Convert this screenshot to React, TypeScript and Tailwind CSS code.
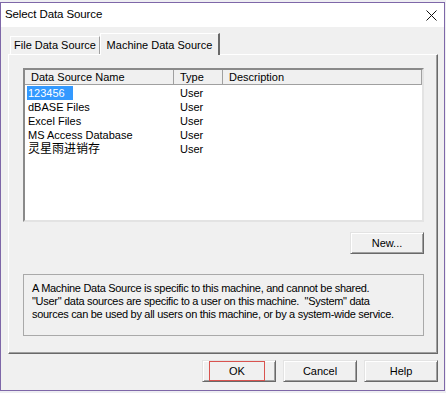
import React from 'react';

const rows = [
  { name: '123456', type: 'User', selected: true },
  { name: 'dBASE Files', type: 'User' },
  { name: 'Excel Files', type: 'User' },
  { name: 'MS Access Database', type: 'User' },
  { name: '灵星雨进销存', type: 'User' },
];

function WinButton({ label, focus = false }: { label: string; focus?: boolean }) {
  return (
    <button className="w-[74px] h-[22px] flex items-center justify-center bg-[#f0f0f0] border border-t-[#e3e3e3] border-l-[#e3e3e3] border-r-[#696969] border-b-[#696969] shadow-[inset_1px_1px_0_#ffffff,inset_-1px_-1px_0_#a0a0a0] text-[11px] text-black">
      {focus ? (
        <span className="w-[56px] h-[20px] -ml-[4px] flex items-center justify-center border border-[#d9534f]">{label}</span>
      ) : (
        label
      )}
    </button>
  );
}

export default function App() {
  return (
    <div
      className="w-[446px] h-[393px] bg-[#eeeef2] overflow-hidden"
      style={{ fontFamily: '"Liberation Sans", "Noto Sans CJK SC", sans-serif' }}
    >
      <div className="mt-[2px] w-[445px] h-[389px] border border-[#7e67a8] flex flex-col bg-[#f0f0f0]">
        {/* Title bar */}
        <div className="h-[24px] bg-white flex items-center justify-between pl-[4px] pr-[7px]">
          <span className="text-[11.5px] text-black tracking-[-0.1px]">Select Data Source</span>
          <svg width="11" height="11" viewBox="0 0 11 11">
            <path d="M0.5 0.5 L10.5 10.5 M10.5 0.5 L0.5 10.5" stroke="#111" strokeWidth="1" />
          </svg>
        </div>

        {/* Body */}
        <div className="flex-1 pl-[7px] pt-[6px]">
          {/* Tabs */}
          <div className="flex items-end h-[21px] pl-[2px]">
            <div className="h-[18px] w-[90px] flex items-center justify-center border-t border-l border-white border-r border-r-[#a0a0a0] text-[11px] text-black">
              File Data Source
            </div>
            <div className="relative z-10 -mb-px h-[22px] w-[120px] flex items-start pt-[3px] justify-center bg-[#f0f0f0] border-t border-l border-white border-r-2 border-r-[#696969] text-[11px] text-black">
              Machine Data Source
            </div>
          </div>

          {/* Panel */}
          <div className="w-[430px] h-[300px] border border-t-white border-l-white border-r-[#696969] border-b-[#696969] shadow-[inset_-1px_-1px_0_#a0a0a0] pl-[14px] pt-[13px]">
            {/* List */}
            <div className="w-[401px] h-[154px] bg-white border-2 border-t-[#8a8a8a] border-l-[#8a8a8a] border-r-[#e3e3e3] border-b-[#e3e3e3] text-[11px] text-black">
              <div className="flex h-[15px] bg-[#f0f0f0] border-b border-[#a0a0a0] w-[397px]">
                <div className="w-[149px] pl-[6px] border-r border-[#a0a0a0] leading-[15px]">Data Source Name</div>
                <div className="w-[49px] pl-[6px] border-r border-[#a0a0a0] leading-[15px]">Type</div>
                <div className="w-[199px] pl-[6px] border-r border-[#a0a0a0] leading-[15px]">Description</div>
              </div>
              <div className="flex flex-col pt-px">
                {rows.map((r) => (
                  <div key={r.name} className="flex h-[14px] items-center">
                    <div className="w-[149px] pl-[2px]">
                      <span
                        className={
                          r.selected
                            ? 'bg-[#3399ff] text-white pl-[1px] pr-[8px] leading-[14px] inline-block'
                            : 'pl-[1px] leading-[14px] inline-block'
                        }
                        style={r.name.startsWith('灵') ? { fontSize: '12px' } : undefined}
                      >
                        {r.name}
                      </span>
                    </div>
                    <div className="w-[49px] pl-[6px] leading-[14px]">{r.type}</div>
                  </div>
                ))}
              </div>
            </div>

            {/* New button */}
            <div className="w-[401px] flex justify-end mt-[10px]">
              <WinButton label="New..." />
            </div>

            {/* Info box */}
            <div className="w-[401px] h-[62px] mt-[20px] border border-[#a9a9a9] pl-[8px] pt-[7px] text-[11px] leading-[13px] tracking-[-0.3px] text-black">
              <p>A Machine Data Source is specific to this machine, and cannot be shared.</p>
              <p>"User" data sources are specific to a user on this machine.&nbsp; "System" data</p>
              <p>sources can be used by all users on this machine, or by a system-wide service.</p>
            </div>
          </div>

          {/* Footer */}
          <div className="w-[430px] flex justify-end gap-[7px] mt-[6px]">
            <WinButton label="OK" focus />
            <WinButton label="Cancel" />
            <WinButton label="Help" />
          </div>
        </div>
      </div>
    </div>
  );
}
